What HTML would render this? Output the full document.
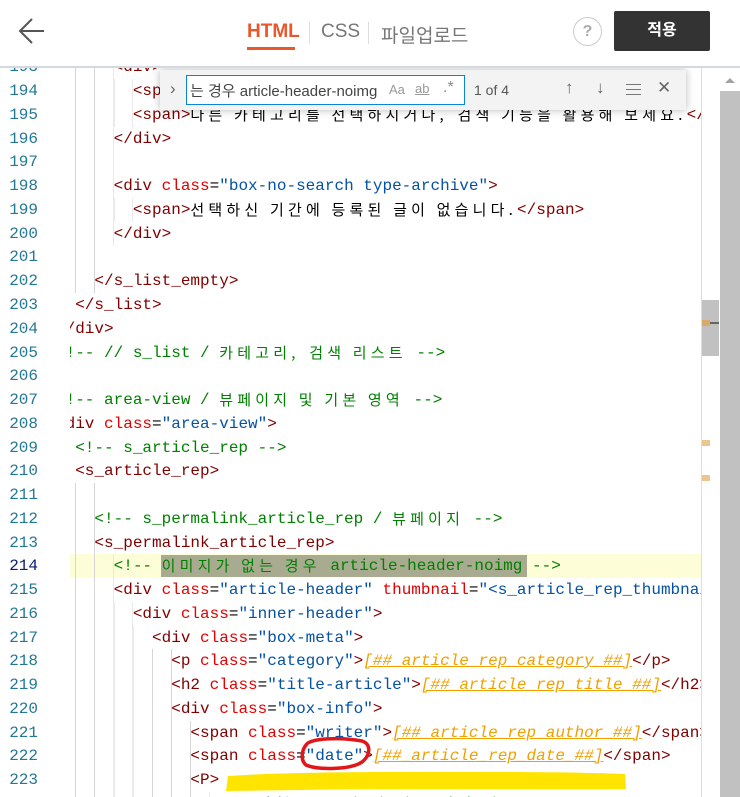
<!DOCTYPE html>
<html><head><meta charset="utf-8">
<style>
*{margin:0;padding:0;box-sizing:border-box}
html,body{width:740px;height:797px;overflow:hidden}
body{background:#fff;position:relative;font-family:"Liberation Sans","Noto Sans CJK KR",sans-serif}
#hdr{position:absolute;left:0;top:0;width:740px;height:68px;background:#fff;border-bottom:2px solid #d4d8df;z-index:5}
.tab{position:absolute;top:21px;font-size:19px;color:#777}
.sep{position:absolute;top:22px;width:1px;height:22px;background:#ddd}
#code{position:absolute;left:0;top:0;width:740px;height:797px;overflow:hidden}
.ln{position:absolute;left:0;width:38px;text-align:right;font:16px "Liberation Mono",monospace;color:#237893;height:24px;line-height:24px}
.cl{position:absolute;left:0;width:740px;height:24px}
.tx{position:absolute;left:56px;top:0;height:24px;white-space:pre;font:16px "Liberation Mono","Noto Sans CJK KR",monospace;line-height:24px;color:#000}
.clip{position:absolute;left:70px;top:68px;width:631px;height:729px;overflow:hidden}
.k{display:inline-block;vertical-align:top;height:24px;line-height:24px;font-family:"Noto Sans CJK KR",sans-serif;font-size:15px;letter-spacing:4.2px}
.t{color:#800000}.a{color:#e50000}.v{color:#0451a5}.c{color:#008000}
.o{color:#f0a000;font-style:italic;text-decoration:underline}
.ig{position:absolute;top:0;height:24px;background:repeating-linear-gradient(to right,#d6d6d6 0 1px,transparent 1px 19.2px)}
</style></head><body>
<div id="hdr">
<svg style="position:absolute;left:18px;top:17px" width="28" height="28" viewBox="0 0 28 28"><path d="M26 14H3M14 2L2 14l12 12" fill="none" stroke="#555" stroke-width="2"/></svg>
<div class="tab" style="left:247px;color:#e9572b;font-weight:bold">HTML</div>
<div style="position:absolute;left:247px;top:47px;width:48px;height:3px;background:#e9572b"></div>
<div class="sep" style="left:309px"></div>
<div class="tab" style="left:321px">CSS</div>
<div class="sep" style="left:368px"></div>
<div class="tab" style="left:381px">파일업로드</div>
<div style="position:absolute;left:573px;top:17px;width:29px;height:29px;border:1px solid #ccc;border-radius:50%;text-align:center;line-height:27px;font-size:16px;font-weight:bold;color:#aaa">?</div>
<div style="position:absolute;left:614px;top:11px;width:96px;height:40px;background:#333;border-radius:2px;color:#fff;text-align:center;line-height:40px;font-size:16px;font-weight:bold">적용</div>
</div>

<div id="code">
<div class="ln" style="top:55px">193</div>
<div class="ln" style="top:79px">194</div>
<div class="ln" style="top:103px">195</div>
<div class="ln" style="top:127px">196</div>
<div class="ln" style="top:150px">197</div>
<div class="ln" style="top:174px">198</div>
<div class="ln" style="top:198px">199</div>
<div class="ln" style="top:222px">200</div>
<div class="ln" style="top:245px">201</div>
<div class="ln" style="top:269px">202</div>
<div class="ln" style="top:293px">203</div>
<div class="ln" style="top:317px">204</div>
<div class="ln" style="top:341px">205</div>
<div class="ln" style="top:364px">206</div>
<div class="ln" style="top:388px">207</div>
<div class="ln" style="top:412px">208</div>
<div class="ln" style="top:436px">209</div>
<div class="ln" style="top:459px">210</div>
<div class="ln" style="top:483px">211</div>
<div class="ln" style="top:507px">212</div>
<div class="ln" style="top:531px">213</div>
<div class="ln" style="top:554px;color:#0b216f">214</div>
<div class="ln" style="top:578px">215</div>
<div class="ln" style="top:602px">216</div>
<div class="ln" style="top:626px">217</div>
<div class="ln" style="top:649px">218</div>
<div class="ln" style="top:673px">219</div>
<div class="ln" style="top:697px">220</div>
<div class="ln" style="top:721px">221</div>
<div class="ln" style="top:744px">222</div>
<div class="ln" style="top:768px">223</div>

<div class="clip">
<div style="position:absolute;left:-70px;top:-68px;width:740px;height:865px;overflow:hidden">
<div class="cl" style="top:554px;background:#fdfdd8"></div>
<div style="position:absolute;left:161px;top:555px;width:366px;height:22px;background:#a8ab90"></div>

<div class="cl" style="top:55px"><div class="ig" style="left:75px;width:39px"></div><div class="tx"><span class="t">      &lt;div&gt;</span></div></div>
<div class="cl" style="top:79px"><div class="ig" style="left:75px;width:58px"></div><div class="tx">        <span class="t">&lt;span&gt;</span></div></div>
<div class="cl" style="top:103px"><div class="ig" style="left:75px;width:58px"></div><div class="tx">        <span class="t">&lt;span&gt;</span><span class="k">다른 카테고리를 선택하시거나,</span> <span class="k">검색 기능을 활용해 보세요.</span><span class="t">&lt;/span&gt;</span></div></div>
<div class="cl" style="top:127px"><div class="ig" style="left:75px;width:39px"></div><div class="tx">      <span class="t">&lt;/div&gt;</span></div></div>
<div class="cl" style="top:150px"><div class="ig" style="left:75px;width:39px"></div></div>
<div class="cl" style="top:174px"><div class="ig" style="left:75px;width:39px"></div><div class="tx">      <span class="t">&lt;div</span> <span class="a">class</span>=<span class="v">"box-no-search type-archive"</span><span class="t">&gt;</span></div></div>
<div class="cl" style="top:198px"><div class="ig" style="left:75px;width:58px"></div><div class="tx">        <span class="t">&lt;span&gt;</span><span class="k">선택하신 기간에 등록된 글이 없습니다.</span><span class="t">&lt;/span&gt;</span></div></div>
<div class="cl" style="top:222px"><div class="ig" style="left:75px;width:39px"></div><div class="tx">      <span class="t">&lt;/div&gt;</span></div></div>
<div class="cl" style="top:245px"><div class="ig" style="left:75px;width:20px"></div></div>
<div class="cl" style="top:269px"><div class="ig" style="left:75px;width:20px"></div><div class="tx">    <span class="t">&lt;/s_list_empty&gt;</span></div></div>
<div class="cl" style="top:293px"><div class="tx">  <span class="t">&lt;/s_list&gt;</span></div></div>
<div class="cl" style="top:317px"><div class="tx"><span class="t">&lt;/div&gt;</span></div></div>
<div class="cl" style="top:341px"><div class="tx"><span class="c">&lt;!-- // s_list / <span class="k">카테고리,</span> <span class="k">검색 리스트</span> --&gt;</span></div></div>
<div class="cl" style="top:388px"><div class="tx"><span class="c">&lt;!-- area-view / <span class="k">뷰페이지 및 기본 영역</span> --&gt;</span></div></div>
<div class="cl" style="top:412px"><div class="tx"><span class="t">&lt;div</span> <span class="a">class</span>=<span class="v">"area-view"</span><span class="t">&gt;</span></div></div>
<div class="cl" style="top:436px"><div class="tx">  <span class="c">&lt;!-- s_article_rep --&gt;</span></div></div>
<div class="cl" style="top:459px"><div class="tx">  <span class="t">&lt;s_article_rep&gt;</span></div></div>
<div class="cl" style="top:483px"><div class="ig" style="left:75px;width:20px"></div></div>
<div class="cl" style="top:507px"><div class="ig" style="left:75px;width:20px"></div><div class="tx">    <span class="c">&lt;!-- s_permalink_article_rep / <span class="k">뷰페이지</span> --&gt;</span></div></div>
<div class="cl" style="top:531px"><div class="ig" style="left:75px;width:20px"></div><div class="tx">    <span class="t">&lt;s_permalink_article_rep&gt;</span></div></div>
<div class="cl" style="top:554px"><div class="ig" style="left:75px;width:39px"></div><div class="tx">      <span class="c">&lt;!-- <span class="k">이미지가 없는 경우</span> article-header-noimg --&gt;</span></div></div>
<div class="cl" style="top:578px"><div class="ig" style="left:75px;width:39px"></div><div class="tx">      <span class="t">&lt;div</span> <span class="a">class</span>=<span class="v">"article-header"</span> <span class="a">thumbnail</span>=<span class="v">"&lt;s_article_rep_thumbnail</span></div></div>
<div class="cl" style="top:602px"><div class="ig" style="left:75px;width:58px"></div><div class="tx">        <span class="t">&lt;div</span> <span class="a">class</span>=<span class="v">"inner-header"</span><span class="t">&gt;</span></div></div>
<div class="cl" style="top:626px"><div class="ig" style="left:75px;width:77px"></div><div class="tx">          <span class="t">&lt;div</span> <span class="a">class</span>=<span class="v">"box-meta"</span><span class="t">&gt;</span></div></div>
<div class="cl" style="top:649px"><div class="ig" style="left:75px;width:97px"></div><div class="tx">            <span class="t">&lt;p</span> <span class="a">class</span>=<span class="v">"category"</span><span class="t">&gt;</span><span class="o">[##_article_rep_category_##]</span><span class="t">&lt;/p&gt;</span></div></div>
<div class="cl" style="top:673px"><div class="ig" style="left:75px;width:97px"></div><div class="tx">            <span class="t">&lt;h2</span> <span class="a">class</span>=<span class="v">"title-article"</span><span class="t">&gt;</span><span class="o">[##_article_rep_title_##]</span><span class="t">&lt;/h2&gt;</span></div></div>
<div class="cl" style="top:697px"><div class="ig" style="left:75px;width:97px"></div><div class="tx">            <span class="t">&lt;div</span> <span class="a">class</span>=<span class="v">"box-info"</span><span class="t">&gt;</span></div></div>
<div class="cl" style="top:721px"><div class="ig" style="left:75px;width:116px"></div><div class="tx">              <span class="t">&lt;span</span> <span class="a">class</span>=<span class="v">"writer"</span><span class="t">&gt;</span><span class="o">[##_article_rep_author_##]</span><span class="t">&lt;/span&gt;</span></div></div>
<div class="cl" style="top:744px"><div class="ig" style="left:75px;width:116px"></div><div class="tx">              <span class="t">&lt;span</span> <span class="a">class</span>=<span class="v">"date"</span><span class="t">&gt;</span><span class="o">[##_article_rep_date_##]</span><span class="t">&lt;/span&gt;</span></div></div>
<div class="cl" style="top:768px"><div class="ig" style="left:75px;width:116px"></div><div class="tx">              <span class="t">&lt;P&gt;</span></div></div>
<div class="cl" style="top:792px"><div class="ig" style="left:75px;width:135px"></div><div class="tx">                <span class="c">&lt;!-- <span class="k">발행 글 공감 및 댓글 영역 버튼</span> --&gt;</span></div></div>
</div>
</div>

<!-- annotations -->
<svg style="position:absolute;left:0;top:0" width="740" height="797">
<path d="M228 776 C300 771 420 772 500 772 C560 772 600 773 625 774 L626 789 C560 790 420 788 300 790 L226 791 Z" fill="#ffe400"/>
<path d="M306 745 C310 738 340 737 362 741 C372 744 370 756 362 762 C350 770 318 770 306 765 C300 760 302 750 306 745 Z" fill="none" stroke="#e0161b" stroke-width="3.5"/>
</svg>

<!-- overview ruler / scrollbar -->
<div style="position:absolute;left:701px;top:68px;width:1px;height:729px;background:#ddd"></div>
<div style="position:absolute;left:702px;top:300px;width:17px;height:56px;background:#c1c1c1"></div>
<div style="position:absolute;left:702px;top:322px;width:17px;height:2px;background:#666"></div>
<div style="position:absolute;left:702px;top:320px;width:8px;height:6px;background:#d9a86a"></div>
<div style="position:absolute;left:702px;top:440px;width:8px;height:6px;background:#edc58f"></div>
<div style="position:absolute;left:702px;top:475px;width:8px;height:6px;background:#edc58f"></div>
<div style="position:absolute;left:720px;top:68px;width:20px;height:729px;background:#fff"></div>
<div style="position:absolute;left:720px;top:91px;width:20px;height:706px;background:#c1c1c1"></div>
<div style="position:absolute;left:725px;top:78px;width:0;height:0;border-left:5px solid transparent;border-right:5px solid transparent;border-bottom:5px solid #a3a3a3"></div>

<!-- find widget -->
<div style="position:absolute;left:160px;top:70px;width:526px;height:40px;background:#f3f3f3;box-shadow:0 0 8px rgba(0,0,0,.28);z-index:4">
<div style="position:absolute;left:10px;top:9px;font-size:17px;color:#666">›</div>
<div style="position:absolute;left:26px;top:5px;width:279px;height:30px;background:#fff;border:1px solid #0a84d8"></div>
<div style="position:absolute;left:30px;top:10px;font-size:15px;color:#444;white-space:nowrap">는 경우 article-header-noimg</div>
<div style="position:absolute;left:229px;top:12px;font-size:13px;color:#999">Aa</div>
<div style="position:absolute;left:255px;top:11px;font-size:13px;color:#999;text-decoration:underline">ab</div>
<div style="position:absolute;left:283px;top:9px;font-size:16px;color:#888">.*</div>
<div style="position:absolute;left:314px;top:12px;font-size:14px;color:#555">1 of 4</div>
<div style="position:absolute;left:405px;top:8px;font-size:17px;color:#666">↑</div>
<div style="position:absolute;left:436px;top:8px;font-size:17px;color:#666">↓</div>
<div style="position:absolute;left:466px;top:14px;width:15px;height:1px;background:#777;box-shadow:0 5px 0 #777,0 10px 0 #777"></div>
<div style="position:absolute;left:497px;top:8px;font-size:17px;color:#666">✕</div>
</div>
</div>
</body></html>
